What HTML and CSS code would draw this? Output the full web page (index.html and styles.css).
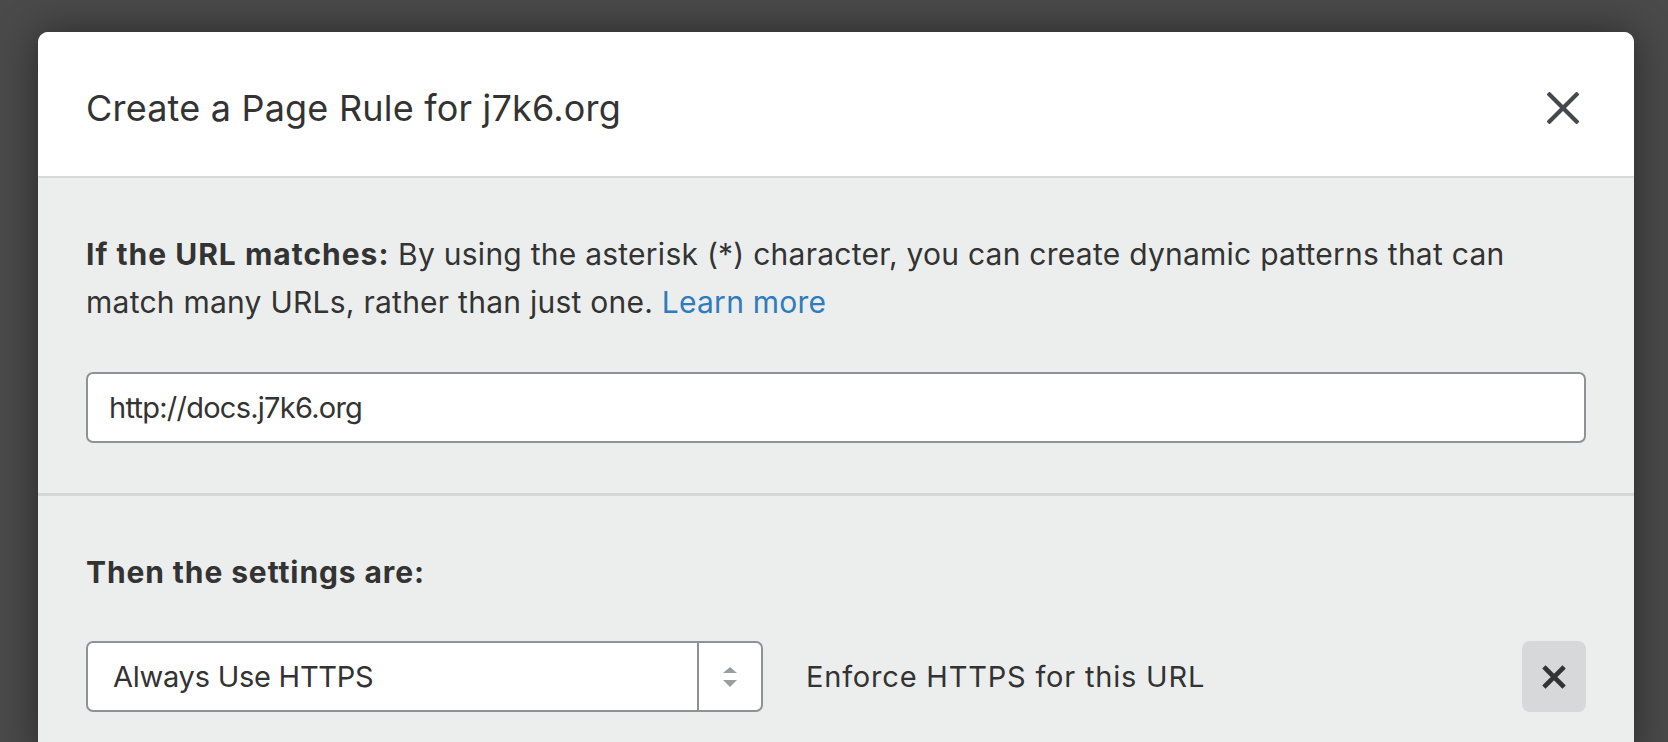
FILE: index.html
```html
<!DOCTYPE html>
<html lang="en">
<head>
<meta charset="utf-8">
<title>Create a Page Rule</title>
<link rel="stylesheet" href="styles.css">
</head>
<body>
<div class="overlay">
  <div class="modal">
    <header class="modal-header">
      <h2 class="modal-title">Create a Page Rule for j7k6.org</h2>
      <button class="close-btn" aria-label="Close">
        <svg width="32" height="32" viewBox="0 0 32 32"><path d="M2.5 2.5 L29.5 29.5 M29.5 2.5 L2.5 29.5" stroke="#45494d" stroke-width="4.2" stroke-linecap="square" fill="none"/></svg>
      </button>
    </header>
    <section class="section">
      <p class="desc"><strong>If the URL matches:</strong> By using the asterisk (*) character, you can create dynamic patterns that can match many URLs, rather than just one. <a href="#" class="link">Learn more</a></p>
      <div class="text-input">http://docs.j7k6.org</div>
    </section>
    <section class="section section-settings">
      <p class="label">Then the settings are:</p>
      <div class="setting-row">
        <div class="select">
          <span class="select-value">Always Use HTTPS</span>
          <span class="select-arrows">
            <svg width="16" height="24" viewBox="0 0 16 24"><path d="M8 2 L15 8 L1 8 Z M1 15 L15 15 L8 22 Z" fill="#9a9ea1"/></svg>
          </span>
        </div>
        <div class="setting-desc">Enforce HTTPS for this URL</div>
        <button class="remove-btn" aria-label="Remove">
          <svg width="24" height="24" viewBox="0 0 24 24"><path d="M3.5 3.5 L20.5 20.5 M20.5 3.5 L3.5 20.5" stroke="#333" stroke-width="4.6" stroke-linecap="square" fill="none"/></svg>
        </button>
      </div>
    </section>
  </div>
</div>
</body>
</html>
```

FILE: styles.css
```css
html, body {
  margin: 0;
  padding: 0;
  height: 100%;
  overflow: hidden;
}
body {
  background: #4a4a4a;
  font-family: Inter, "Noto Sans", sans-serif;
  color: #333;
}
.overlay {
  padding: 32px 34px 0 38px;
  border-top: 2px solid #3d3d3d;
  margin-top: -2px;
}
.modal {
  width: 1596px;
  background: #eceeed;
  border-radius: 10px 10px 0 0;
  box-shadow: 0 0 40px rgba(0, 0, 0, 0.45);
  overflow: hidden;
}
.modal-header {
  background: #fff;
  border-bottom: 2px solid #d7d9d9;
  display: flex;
  align-items: center;
  justify-content: space-between;
  padding: 7px 55px 0 48px;
  box-sizing: content-box;
  height: 137px;
}
.modal-title {
  margin: 0;
  font-size: 36px;
  font-weight: 400;
  color: #333;
  letter-spacing: 0.2px;
}
.close-btn {
  border: 0;
  background: none;
  padding: 0;
  width: 32px;
  height: 32px;
  display: flex;
}
.section {
  padding: 52px 48px 50px;
}
.section-settings {
  border-top: 3px solid #d5d7d7;
  padding-top: 52px;
}
.desc {
  margin: 0 0 46px;
  font-size: 30px;
  line-height: 48px;
  color: #333;
  letter-spacing: 0.25px;
}
.desc strong {
  font-weight: 700;
  letter-spacing: 1px;
}
.link {
  color: #2f7bbf;
  text-decoration: none;
}
.text-input {
  height: 67px;
  box-sizing: content-box;
  border: 2px solid #8e9295;
  border-radius: 7px;
  background: #fff;
  padding: 0 21px;
  display: flex;
  align-items: center;
  font-size: 29px;
  letter-spacing: -0.75px;
  color: #333;
}
.label {
  margin: 0 0 45px;
  font-size: 30px;
  line-height: 48px;
  font-weight: 700;
  letter-spacing: 0.9px;
  color: #333;
}
.setting-row {
  display: flex;
  align-items: center;
}
.select {
  width: 673px;
  height: 67px;
  border: 2px solid #8e9295;
  border-radius: 7px;
  background: #fff;
  display: flex;
  align-items: stretch;
}
.select-value {
  flex: 1;
  display: flex;
  align-items: center;
  padding-left: 25px;
  font-size: 29px;
  letter-spacing: -0.25px;
  color: #333;
}
.select-arrows {
  width: 62px;
  border-left: 2px solid #8e9295;
  display: flex;
  align-items: center;
  justify-content: center;
}
.setting-desc {
  margin-left: 43px;
  flex: 1;
  font-size: 29px;
  letter-spacing: 0.8px;
  color: #333;
}
.remove-btn {
  width: 64px;
  height: 71px;
  border: 0;
  border-radius: 8px;
  background: #d7d8da;
  padding: 0;
  display: flex;
  align-items: center;
  justify-content: center;
}
```
